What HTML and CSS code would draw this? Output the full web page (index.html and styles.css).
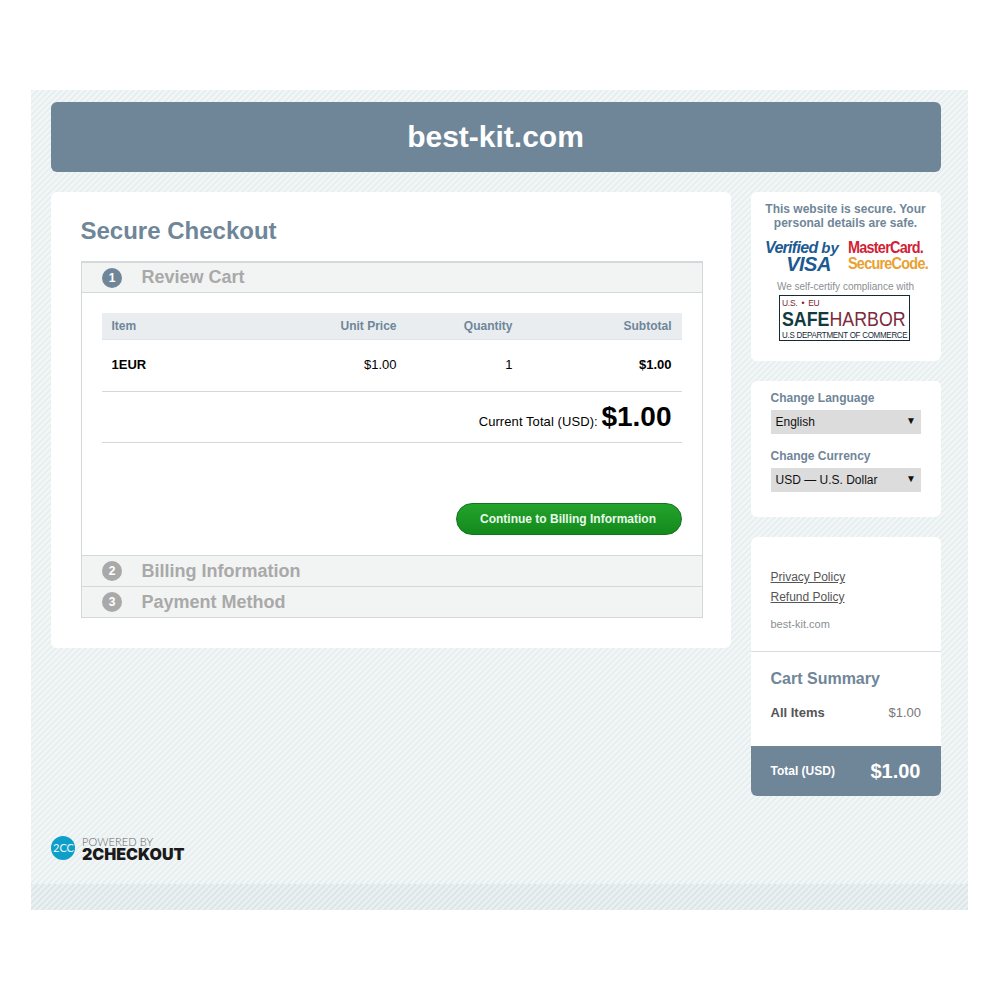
FILE: index.html
```html
<!DOCTYPE html>
<html lang="en">
<head>
  <meta charset="UTF-8" />
  <title>Secure Checkout - best-kit.com</title>
  <link rel="stylesheet" href="styles.css">
</head>
<body>
  <div class="page">
    <header class="site-header">best-kit.com</header>

    <div class="columns">
      <main class="checkout">
        <h1>Secure Checkout</h1>
        <div class="steps">
          <div class="step-head step-first"><span class="num num-on">1</span><span>Review Cart</span></div>
          <div class="step-body">
            <div class="cart-row cart-head">
              <span class="c-item">Item</span>
              <span class="c-price">Unit Price</span>
              <span class="c-qty">Quantity</span>
              <span class="c-sub">Subtotal</span>
            </div>
            <div class="cart-row cart-line">
              <span class="c-item"><b>1EUR</b></span>
              <span class="c-price">$1.00</span>
              <span class="c-qty">1</span>
              <span class="c-sub"><b>$1.00</b></span>
            </div>
            <div class="cart-total"><span class="total-label">Current Total (USD):</span> <strong>$1.00</strong></div>
            <div class="actions"><button type="button">Continue to Billing Information</button></div>
          </div>
          <div class="step-head"><span class="num">2</span><span>Billing Information</span></div>
          <div class="step-head"><span class="num">3</span><span>Payment Method</span></div>
        </div>
      </main>

      <aside class="side">
        <section class="box secure">
          <p class="secure-msg">This website is secure. Your personal details are safe.</p>
          <div class="badges">
            <div class="visa">
              <div class="visa-top">Verified <small>by</small></div>
              <div class="visa-name">VISA</div>
            </div>
            <div class="mc">
              <div class="mc-top">MasterCard.</div>
              <div class="mc-bottom">SecureCode.</div>
            </div>
          </div>
          <p class="certify">We self-certify compliance with</p>
          <div class="harbor">
            <div class="harbor-top">U.S. <i>&bull;</i> EU</div>
            <div class="harbor-name"><b>SAFE</b>HARBOR</div>
            <div class="harbor-bottom">U.S DEPARTMENT OF COMMERCE</div>
          </div>
        </section>

        <section class="box prefs">
          <label for="lang">Change Language</label>
          <div class="fake-select" id="lang"><span>English</span><span class="arrow">&#9660;</span></div>
          <label for="curr">Change Currency</label>
          <div class="fake-select" id="curr"><span>USD &mdash; U.S. Dollar</span><span class="arrow">&#9660;</span></div>
        </section>

        <section class="box summary">
          <div class="links">
            <a href="#">Privacy Policy</a>
            <a href="#">Refund Policy</a>
            <p>best-kit.com</p>
          </div>
          <div class="cart-summary">
            <h2>Cart Summary</h2>
            <div class="sum-row"><b>All Items</b><span>$1.00</span></div>
          </div>
          <div class="sum-total"><b>Total (USD)</b><strong>$1.00</strong></div>
        </section>
      </aside>
    </div>

    <div class="powered">
      <span class="logo-circle">2CC</span>
      <div class="powered-text">
        <div class="powered-by">POWERED BY</div>
        <div class="powered-name">2CHECKOUT</div>
      </div>
    </div>
    <div class="strip"></div>
  </div>
</body>
</html>
```

FILE: styles.css
```css
* { box-sizing: border-box; margin: 0; padding: 0; }
body { background: #fff; font-family: "Liberation Sans", Arial, sans-serif; color: #000; padding-top: 90px; }

.page {
  width: 937px;
  margin-left: 31px;
  padding-top: 12px;
  background: linear-gradient(135deg, #e8eff1 20%, #f2f6f6 20%, #f2f6f6 50%, #e8eff1 50%, #e8eff1 70%, #f2f6f6 70%) 0 0 / 6px 6px;
}

.site-header {
  width: 890px;
  height: 70px;
  margin-left: 20px;
  background: #6f8699;
  border-radius: 6px;
  color: #fff;
  font-size: 30px;
  font-weight: bold;
  line-height: 70px;
  text-align: center;
  text-indent: -1px;
}

.columns {
  display: flex;
  gap: 20px;
  align-items: flex-start;
  margin: 20px 0 0 20px;
}

/* main column */
.checkout {
  width: 680px;
  height: 456px;
  padding: 24px 28px 0 30px;
  background: #fff;
  border-radius: 6px;
}
.checkout h1 {
  font-size: 24px;
  line-height: 30px;
  color: #6f8699;
  margin-bottom: 15px;
  text-indent: -0.5px;
}
.steps {
  width: 622px;
  border: 1px solid #d5d8da;
  border-top-width: 2px;
}
.step-head {
  display: flex;
  align-items: center;
  gap: 19.5px;
  height: 31px;
  padding-left: 20px;
  background: #f2f3f3;
  border-top: 1px solid #d5d8da;
  font-size: 18px;
  font-weight: bold;
  color: #a9a9a9;
}
.step-first { height: 30px; border-top: 0; border-bottom: 1px solid #d5d8da; }
.num {
  width: 20px;
  height: 20px;
  border-radius: 50%;
  background: #a9a9a9;
  color: #fff;
  font-size: 12px;
  line-height: 20px;
  text-align: center;
}
.num-on { background: #6f8699; }

.step-body { height: 262px; padding: 20px 20px 0; }
.cart-row { display: flex; padding: 0 10.5px 0 9.5px; font-size: 13px; }
.cart-head {
  height: 27px;
  line-height: 26px;
  background: #e9edf0;
  border-bottom: 1px solid #dfe3e6;
  color: #6f8699;
  font-size: 12px;
  font-weight: bold;
}
.cart-line { height: 52px; line-height: 50px; border-bottom: 1px solid #d5d8da; }
.c-item { width: 140px; }
.c-price { width: 145px; text-align: right; }
.c-qty { width: 116px; text-align: right; }
.c-sub { flex: 1; text-align: right; }

.cart-total {
  height: 51px;
  padding-right: 10.5px;
  border-bottom: 1px solid #d5d8da;
  font-size: 13px;
  line-height: 50px;
  text-align: right;
}
.total-label { position: relative; top: 1px; letter-spacing: 0.08px; }
.cart-total strong { font-size: 28px; vertical-align: -1px; }

.actions { display: flex; justify-content: flex-end; margin-top: 60px; }
.actions button {
  width: 226px;
  height: 32px;
  border: 1px solid #12751d;
  border-radius: 16px;
  background: linear-gradient(#23a32c, #138a1d);
  color: #e9f9ea;
  font-family: inherit;
  font-size: 12px;
  font-weight: bold;
  padding-right: 2px;
}

/* right column */
.side { width: 190px; display: flex; flex-direction: column; gap: 20px; }
.box { background: #fff; border-radius: 6px; }

.secure { height: 169px; padding: 10px 12px 0; text-align: center; }
.secure-msg { font-size: 12px; line-height: 14px; font-weight: bold; color: #6f8699; margin-left: -1px; }
.badges { display: flex; justify-content: space-between; margin: 10px 0 0 2px; height: 32px; }
.visa { width: 73px; color: #1c5a92; font-style: italic; font-weight: bold; white-space: nowrap; }
.visa-top { font-size: 16px; line-height: 16px; letter-spacing: -0.7px; }
.visa-top small { font-size: 15px; letter-spacing: 0; }
.visa-name { font-size: 20px; line-height: 17px; padding-left: 14px; letter-spacing: -0.5px; }
.mc {
  width: 78px;
  margin-right: 3px;
  font-weight: bold;
  font-size: 17px;
  line-height: 16px;
  letter-spacing: -0.9px;
  text-align: left;
  white-space: nowrap;
  transform: scaleX(0.85);
  transform-origin: left;
}
.mc-top { color: #d11f36; }
.mc-bottom { color: #e9a132; }
.certify { margin-top: 8px; margin-left: -1px; font-size: 10px; line-height: 13px; color: #8a8f93; white-space: nowrap; }
.harbor {
  width: 131px;
  height: 46px;
  margin: 2px 0 0 16px;
  padding: 2px 0 0 2px;
  border: 1px solid #162a33;
  text-align: left;
  white-space: nowrap;
  overflow: hidden;
}
.harbor-top { font-size: 8.5px; line-height: 10px; color: #7c1f30; letter-spacing: -0.3px; }
.harbor-top i { font-style: normal; padding: 0 2px; }
.harbor-name { font-size: 20px; line-height: 22px; color: #7c2a3c; transform: scaleX(0.89); transform-origin: left; }
.harbor-name b { color: #123a40; }
.harbor-bottom { font-size: 8.5px; line-height: 10px; color: #162a33; letter-spacing: -0.3px; transform: scaleX(0.94); transform-origin: left; }

.prefs { height: 136px; padding: 10px 20px 0; }
.prefs label { display: block; margin-left: -0.5px; font-size: 12px; line-height: 14px; font-weight: bold; color: #6f8699; margin-bottom: 5px; }
.fake-select {
  display: flex;
  justify-content: space-between;
  width: 150px;
  height: 24px;
  margin-bottom: 15px;
  padding: 0 5px 0 4.5px;
  background: #dcdcdc;
  font-size: 12px;
  line-height: 24px;
  color: #111;
}
.arrow { font-size: 10px; line-height: 22px; }

.summary { height: 259px; display: flex; flex-direction: column; overflow: hidden; }
.links { height: 115px; padding: 33px 20px 0 19.5px; border-bottom: 1px solid #d8dcdf; font-size: 12px; }
.links a { display: block; line-height: 14px; margin-bottom: 6px; color: #555; }
.links p { margin-top: 13px; font-size: 11px; line-height: 14px; color: #8a8f93; }
.cart-summary { flex: 1; padding: 17px 20px 0 19.5px; }
.cart-summary h2 { font-size: 16px; line-height: 20px; color: #6f8699; }
.sum-row { display: flex; justify-content: space-between; margin-top: 16px; font-size: 13px; line-height: 15px; color: #555; }
.sum-row span { color: #777; }
.sum-total {
  display: flex;
  justify-content: space-between;
  align-items: center;
  height: 50px;
  padding: 0 20.5px 0 19.5px;
  background: #6f8699;
  color: #fff;
}
.sum-total b { font-size: 12px; }
.sum-total strong { font-size: 20px; }

/* footer */
.powered { display: flex; align-items: center; gap: 7px; height: 88px; margin: 0 0 0 20px; padding-top: 16px; }
.logo-circle {
  width: 24px;
  height: 24px;
  padding-left: 2px;
  border-radius: 50%;
  background: #0e9fc9;
  color: #e6f7fb;
  font-family: Lato, sans-serif;
  font-size: 11px;
  line-height: 24px;
  overflow: hidden;
  white-space: nowrap;
}
.powered-by { font-family: Lato, sans-serif; font-size: 11px; line-height: 11px; color: #666; font-weight: 300; letter-spacing: 0.1px; margin-bottom: 1px; }
.powered-name { font-family: Inter, sans-serif; font-size: 16px; line-height: 13px; font-weight: 900; color: #1a1a1a; }
.strip {
  height: 26px;
  background: linear-gradient(135deg, #dde6e9 20%, #ebf0f2 20%, #ebf0f2 50%, #dde6e9 50%, #dde6e9 70%, #ebf0f2 70%) 0 0 / 6px 6px;
}
```
